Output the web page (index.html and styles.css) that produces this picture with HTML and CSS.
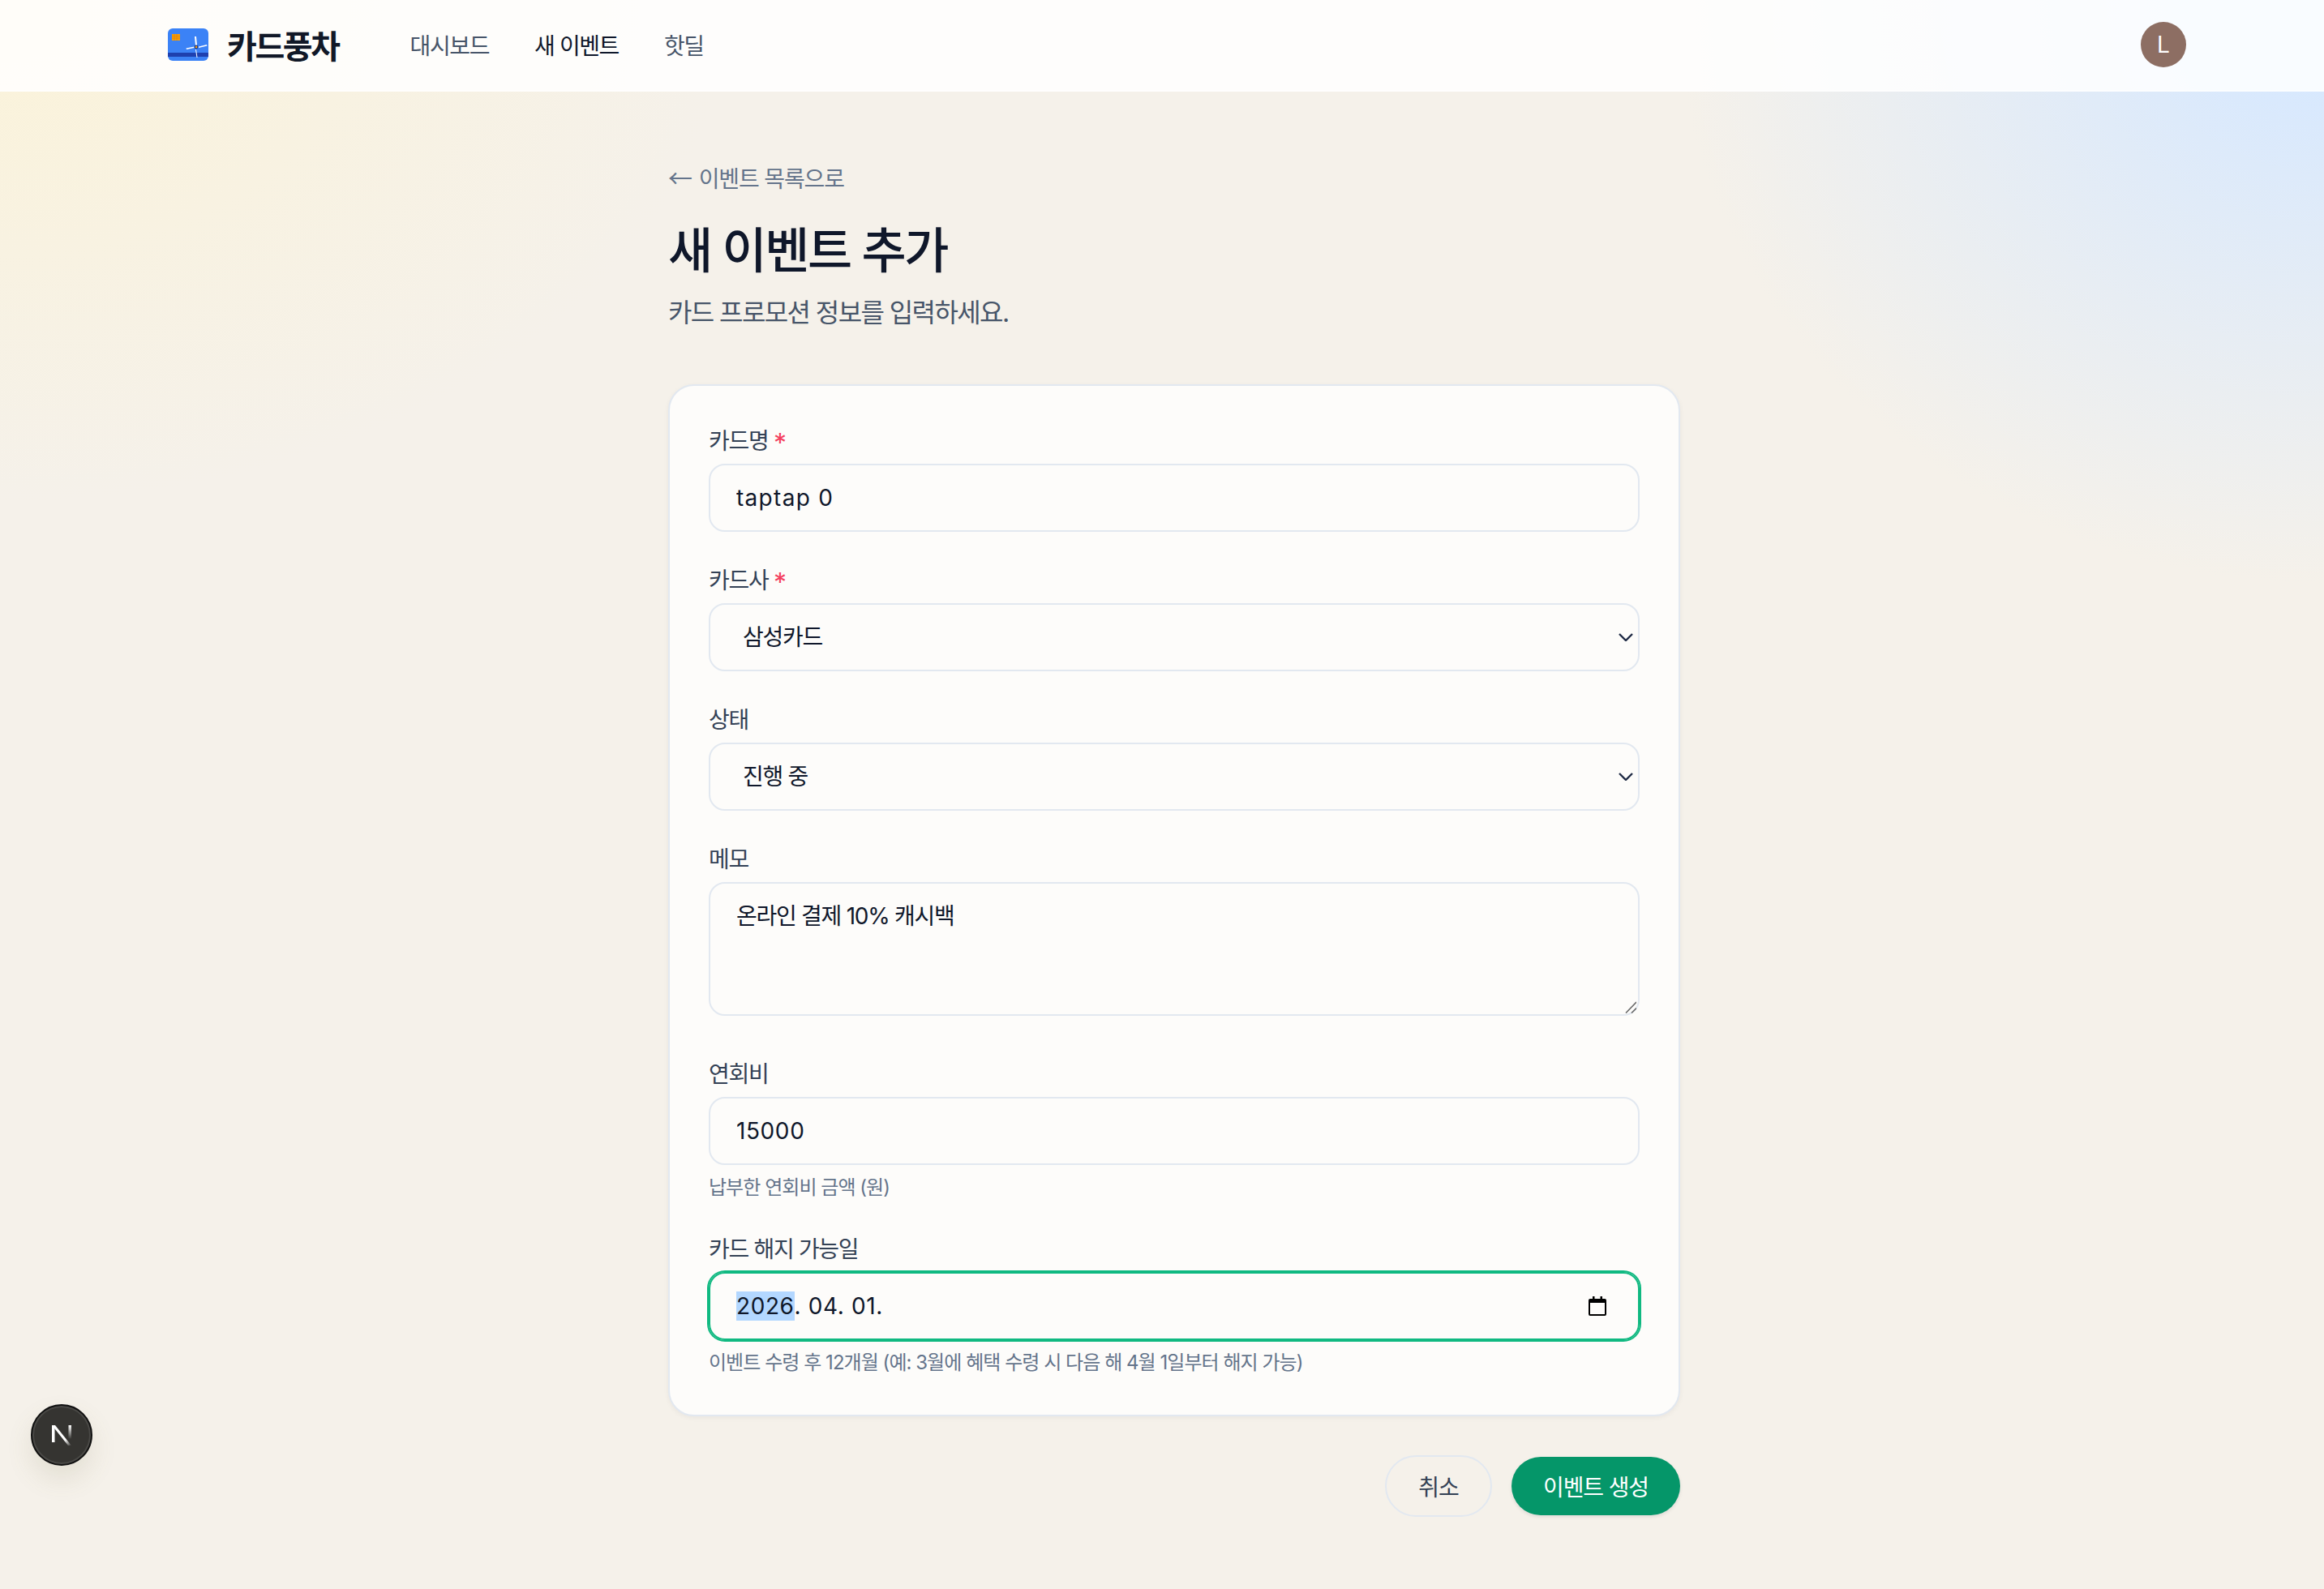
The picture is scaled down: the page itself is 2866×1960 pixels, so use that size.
FILE: index.html
```html
<!DOCTYPE html>
<html lang="ko">
<head>
  <meta charset="UTF-8" />
  <meta name="viewport" content="width=device-width, initial-scale=1.0"/>
  <title>카드풍차 - 새 이벤트 추가</title>
  <link rel="stylesheet" href="styles.css">
</head>
<body>

  <!-- Header -->
  <header class="site-header">
    <a class="brand" href="#">
      <svg class="brand-icon" viewBox="0 0 50 40" aria-hidden="true">
        <rect width="50" height="40" rx="6" fill="#3b82f6"/>
        <rect y="30" width="50" height="5" fill="#1e40af"/>
        <rect x="5" y="7" width="10" height="8" fill="#f59e0b"/>
        <path d="M5 9.500h10M5 12h10M8 7v8M11 7v8" stroke="#d97706" stroke-width=".5"/>
        <path d="M34 21 L33 10 L35 10 L36 21 Z" fill="#fff"/>
        <path d="M38 22.500 L48 20 L48.500 21.500 L38 24 Z" fill="#fff"/>
        <path d="M32.500 24 L23 26 L22.500 24.500 L32.500 22.500 Z" fill="#fff"/>
        <path d="M35 26 L36.500 36 L35.500 36 L34 26 Z" fill="#fff"/>
        <circle cx="35" cy="23" r="2.400" fill="#1e3a8a"/>
        <circle cx="35" cy="23" r="1.200" fill="#f59e0b"/>
      </svg>
      <span class="brand-name">카드풍차</span>
    </a>
    <nav class="main-nav">
      <a href="#">대시보드</a>
      <a href="#" class="active">새 이벤트</a>
      <a href="#">핫딜</a>
    </nav>
    <div class="avatar">L</div>
  </header>

  <!-- Content Section -->
  <main class="page">
    <a class="back-link" href="#"><span class="back-arrow">←</span> 이벤트 목록으로</a>
    <h1>새 이벤트 추가</h1>
    <p class="subtitle">카드 프로모션 정보를 입력하세요.</p>

    <form class="card">
      <div class="field">
        <label for="cardName">카드명 <span class="required">*</span></label>
        <input type="text" id="cardName" class="input-name" value="taptap 0">
      </div>

      <div class="field">
        <label for="issuer">카드사 <span class="required">*</span></label>
        <select id="issuer">
          <option>삼성카드</option>
        </select>
      </div>

      <div class="field">
        <label for="status">상태</label>
        <select id="status">
          <option>진행 중</option>
        </select>
      </div>

      <div class="field">
        <label for="memo">메모</label>
        <div class="memo-wrap">
          <textarea id="memo">온라인 결제 10% 캐시백</textarea>
          <svg class="resize-grip" viewBox="0 0 14 15" aria-hidden="true">
            <path d="M1 14.500 L14 1 M8 14.500 L14 8.500" stroke="#6b6b6b" stroke-width="1.600" fill="none"/>
          </svg>
        </div>
      </div>

      <div class="field">
        <label for="fee">연회비</label>
        <input type="text" id="fee" value="15000">
        <p class="hint">납부한 연회비 금액 (원)</p>
      </div>

      <div class="field">
        <label>카드 해지 가능일</label>
        <div class="date-box">
          <span class="date-text"><span class="date-selected">2026</span>. 04. 01.</span>
          <svg class="date-icon" viewBox="0 0 22 24" aria-hidden="true">
            <path d="M5 0h2.500v3h7V0H17v3h3a2 2 0 0 1 2 2v17a2 2 0 0 1-2 2H2a2 2 0 0 1-2-2V5a2 2 0 0 1 2-2h3z M2 8v14h18V8z" fill="#000" fill-rule="evenodd"/>
          </svg>
        </div>
        <p class="hint">이벤트 수령 후 12개월 (예: 3월에 혜택 수령 시 다음 해 4월 1일부터 해지 가능)</p>
      </div>
    </form>

    <div class="actions">
      <button type="button" class="btn-cancel">취소</button>
      <button type="button" class="btn-submit">이벤트 생성</button>
    </div>
  </main>

  <!-- Dev indicator -->
  <div class="dev-badge">
    <svg viewBox="0 0 24 26" aria-hidden="true">
      <defs>
        <linearGradient id="fadeStem" x1="0" y1="0" x2="0" y2="1">
          <stop offset="0" stop-color="#fff"/>
          <stop offset="1" stop-color="#fff" stop-opacity="0"/>
        </linearGradient>
        <linearGradient id="fadeDiag" x1="0" y1="0" x2="1" y2="1">
          <stop offset=".7" stop-color="#fff"/>
          <stop offset="1" stop-color="#fff" stop-opacity="0"/>
        </linearGradient>
      </defs>
      <rect x="0" y="1" width="3.500" height="21" fill="#fff"/>
      <path d="M0 1h4L24 26h-4z" fill="url(#fadeDiag)"/>
      <rect x="20.500" y="1" width="3.500" height="17" fill="url(#fadeStem)"/>
    </svg>
  </div>

</body>
</html>
```

FILE: styles.css
```css
* {
  box-sizing: border-box;
}

html, body {
  margin: 0;
  padding: 0;
}

body {
  position: relative;
  height: 1960px;
  overflow: hidden;
  font-family: Inter, "Noto Sans CJK KR", sans-serif;
  color: #0f172a;
  background-color: #f5f1ea;
  background-image:
    radial-gradient(ellipse 900px 620px at 0 0, #fbf3d9, rgba(251, 243, 217, 0)),
    radial-gradient(ellipse 800px 720px at 100% 0, #d6e8ff 10%, rgba(214, 232, 255, 0));
}

a {
  text-decoration: none;
  color: inherit;
}

.site-header {
  display: flex;
  align-items: center;
  height: 113px;
  padding: 0 170px 1px 207px;
  background: rgba(255, 255, 255, 0.84);
  border-bottom: 2px solid rgba(255, 255, 255, 0.5);
}

.brand {
  display: flex;
  align-items: center;
  gap: 23px;
}

.brand-icon {
  width: 50px;
  height: 40px;
}

.brand-name {
  font-size: 40px;
  font-weight: 700;
  color: #111827;
  letter-spacing: -2.4px;
}

.main-nav {
  display: flex;
  gap: 56px;
  margin-left: 88px;
  font-size: 28px;
  letter-spacing: -0.05em;
  color: #475569;
}

.main-nav .active {
  color: #0f172a;
}

.avatar {
  display: flex;
  align-items: center;
  justify-content: center;
  width: 56px;
  height: 56px;
  margin-left: auto;
  border-radius: 50%;
  background: #8d6e63;
  color: #fff;
  font-size: 28px;
}

.page {
  width: 1248px;
  margin-left: 824px;
  padding-top: 85px;
}

.back-link {
  display: block;
  height: 40px;
  font-size: 28px;
  line-height: 40px;
  letter-spacing: -0.04em;
  color: #64748b;
}

.back-arrow {
  margin-right: 2px;
  font-family: "Noto Sans CJK KR", sans-serif;
  font-size: 30px;
}

h1 {
  margin: 35px 0 0;
  font-size: 60px;
  line-height: 72px;
  font-weight: 500;
  letter-spacing: -0.04em;
  color: #0f172a;
}

.subtitle {
  margin: 17px 0 0;
  font-size: 32px;
  line-height: 48px;
  letter-spacing: -0.05em;
  color: #475569;
}

.card {
  display: flex;
  flex-direction: column;
  gap: 40px;
  margin-top: 64px;
  padding: 48px;
  background: #fdfcfa;
  border: 2px solid #e2e8f0;
  border-radius: 32px;
  box-shadow: 0 2px 6px rgba(15, 23, 42, 0.05);
}

label {
  display: block;
  margin-bottom: 8px;
  font-size: 28px;
  line-height: 40px;
  letter-spacing: -0.047em;
  color: #334155;
}

.required {
  font-size: 32px;
  line-height: 0;
  vertical-align: -4px;
  color: #f43f5e;
}

input, select, textarea {
  display: block;
  width: 100%;
  height: 84px;
  padding: 0 32px;
  font-family: inherit;
  font-size: 28px;
  color: #0f172a;
  background-color: #fdfcfa;
  border: 2px solid #e2e8f0;
  border-radius: 20px;
  outline: none;
}

input {
  letter-spacing: 0.6px;
}

.input-name {
  letter-spacing: 1.3px;
}

select {
  padding-left: 40px;
  letter-spacing: -0.045em;
  appearance: none;
  background-image: url("data:image/svg+xml,%3Csvg xmlns='http://www.w3.org/2000/svg' width='18' height='10' viewBox='0 0 18 10'%3E%3Cpath d='M1 1l8 8 8-8' fill='none' stroke='%231f2a44' stroke-width='2.4'/%3E%3C/svg%3E");
  background-repeat: no-repeat;
  background-position: right 6px center;
}

.memo-wrap {
  position: relative;
  margin-bottom: 12px;
}

textarea {
  height: 165px;
  padding: 20px 32px;
  line-height: 40px;
  letter-spacing: -0.045em;
  resize: none;
}

.resize-grip {
  position: absolute;
  right: 4px;
  bottom: 3px;
  width: 14px;
  height: 15px;
}

.hint {
  margin: 10px 0 -2px;
  font-size: 24px;
  line-height: 36px;
  letter-spacing: -0.04em;
  color: #64748b;
}

.date-box {
  display: flex;
  align-items: center;
  justify-content: space-between;
  height: 84px;
  padding: 0 39px 0 32px;
  border: 2px solid #10b981;
  border-radius: 20px;
  box-shadow: 0 0 0 2px #10b981;
  font-size: 28px;
  letter-spacing: 0.6px;
}

.date-selected {
  display: inline-block;
  line-height: 36px;
  background: #b3d7ff;
}

.date-icon {
  width: 22px;
  height: 24px;
}

.actions {
  display: flex;
  align-items: center;
  justify-content: flex-end;
  gap: 24px;
  margin-top: 48px;
}

.actions button {
  font-family: inherit;
  font-size: 28px;
  letter-spacing: -0.04em;
  border-radius: 40px;
  cursor: pointer;
}

.btn-cancel {
  width: 132px;
  height: 76px;
  color: #334155;
  background: transparent;
  border: 2px solid #e2e8f0;
}

.btn-submit {
  width: 208px;
  height: 72px;
  color: #fff;
  background: #059669;
  border: none;
  box-shadow: 0 2px 4px rgba(15, 23, 42, 0.1);
}

/* sits over the page, bottom left corner */
.dev-badge {
  position: absolute;
  left: 38px;
  top: 1732px;
  display: flex;
  align-items: center;
  justify-content: center;
  width: 76px;
  height: 76px;
  border-radius: 50%;
  background: #353431;
  border: 2px solid #111;
  box-shadow: inset 0 0 0 2px #4a4946, 0 16px 32px rgba(120, 110, 70, 0.14);
}

.dev-badge svg {
  width: 24px;
  height: 26px;
}
```
